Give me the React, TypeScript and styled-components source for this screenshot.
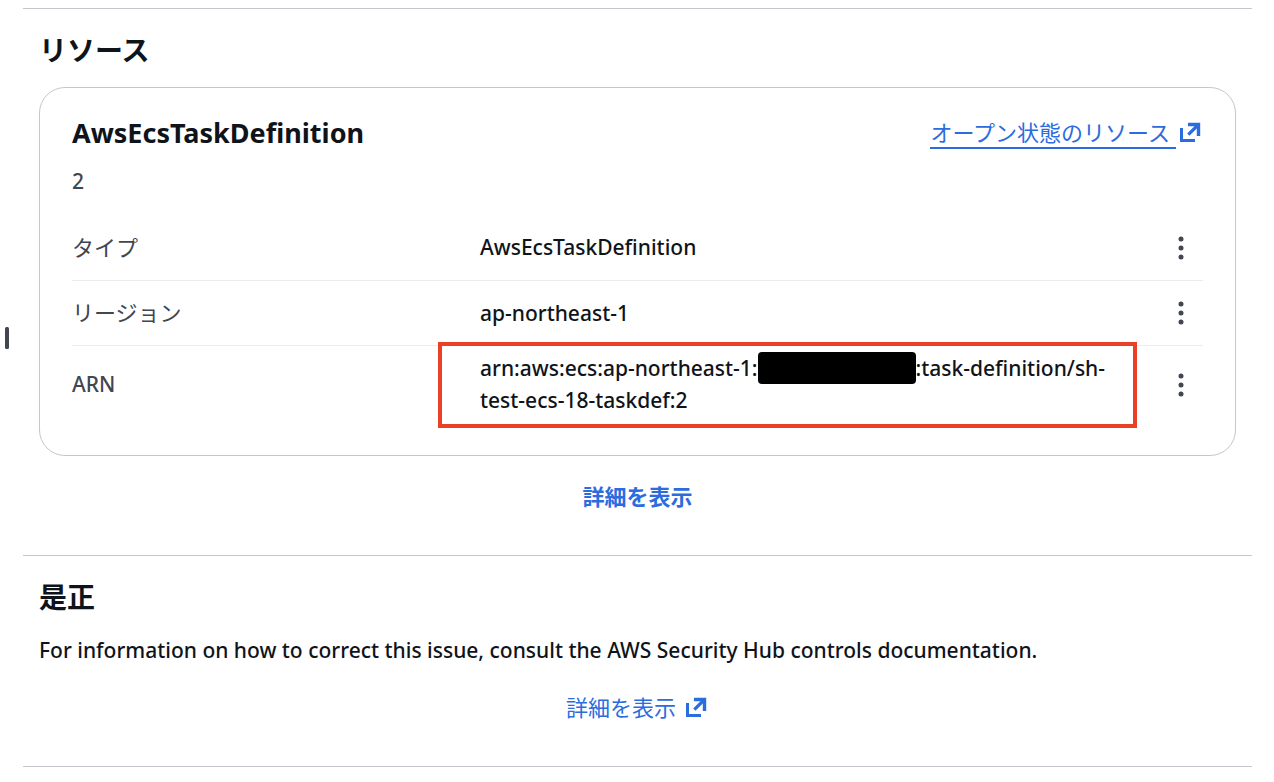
import React from "react";
import styled, { createGlobalStyle } from "styled-components";

const GlobalStyle = createGlobalStyle`
  *, *::before, *::after { box-sizing: border-box; }
  body {
    margin: 0;
    background: #fff;
    color: #0f141a;
    font-family: "Noto Sans", "Noto Sans CJK JP", sans-serif;
    font-size: 21px;
    font-weight: 500;
    line-height: 32px;
  }
  h2, h3, p { margin: 0; }
`;

const Page = styled.div`
  display: grid;
  grid-template-columns: 23px minmax(0, 1fr);
  padding: 8px 22px 8px 0;
`;

const Gutter = styled.div`
  padding: 318px 0 0 4px;
`;

const ResizeHandle = styled.button`
  display: flex;
  padding: 0;
  border: 0;
  background: none;
  cursor: col-resize;
`;

const Section = styled.section`
  border-top: 1px solid #c6c6cd;
  padding: 21px 16px 0;
`;

const Panels = styled.main`
  border-bottom: 1px solid #c6c6cd;
`;

const SectionTitle = styled.h2`
  font-size: 28px;
  line-height: 40px;
  font-weight: 700;
`;

const Card = styled.article`
  margin-top: 17px;
  padding: 27px 32px 32px;
  border: 1px solid #c6c6cd;
  border-radius: 26px;
`;

const CardHeader = styled.header`
  display: flex;
  align-items: center;
  justify-content: space-between;
`;

const CardTitle = styled.h3`
  font-size: 27px;
  line-height: 36px;
  font-weight: 700;
`;

const Version = styled.p`
  margin: 14px 0 18px;
  color: #424650;
`;

const Link = styled.a<{ $underlined?: boolean }>`
  display: inline-flex;
  align-items: center;
  gap: 3px;
  color: #2b6cde;
  font-size: 22px;
  font-weight: 400;
  text-decoration: none;

  span {
    padding-right: 6px;
    line-height: 30px;
    border-bottom: 2px solid ${(p) => (p.$underlined ? "#2b6cde" : "transparent")};
  }
`;

const Fields = styled.table`
  width: 100%;
  table-layout: fixed;
  border-collapse: separate;
  border-spacing: 0;

  tr + tr > * {
    border-top: 1px solid #ebebf0;
  }
`;

const Label = styled.th<{ $latin?: boolean }>`
  width: 408px;
  height: 65px;
  padding: 0 0 2px;
  color: #424650;
  font-size: ${(p) => (p.$latin ? 21 : 22)}px;
  font-weight: ${(p) => (p.$latin ? 500 : 400)};
  text-align: left;
`;

const Value = styled.td`
  position: relative;
  padding: 6px 16px 7px 0;
`;

const Actions = styled.td`
  width: 66px;
  padding: 0 0 2px;
  text-align: right;
`;

const MenuButton = styled.button`
  display: inline-flex;
  align-items: center;
  justify-content: center;
  width: 44px;
  height: 32px;
  padding: 0;
  border: 0;
  background: none;
  color: #424650;
  vertical-align: middle;
  cursor: pointer;
`;

const Highlight = styled.div`
  position: absolute;
  inset: -4px 0 -5px -42px;
  border: 4px solid #ea4126;
  pointer-events: none;
`;

const Redacted = styled.span`
  display: inline-block;
  width: 158px;
  height: 32px;
  border-radius: 4px;
  background: #000;
  vertical-align: top;
`;

const Centered = styled.div<{ $top: number; $bottom: number }>`
  display: flex;
  justify-content: center;
  padding: ${(p) => p.$top}px 0 ${(p) => p.$bottom}px;
`;

const TextButton = styled.button`
  padding: 0;
  border: 0;
  background: none;
  color: #2b6cde;
  font: inherit;
  font-size: 22px;
  font-weight: 700;
  cursor: pointer;
`;

const Description = styled.p`
  margin-top: 17px;
`;

const ExternalIcon = () => (
  <svg width="24" height="24" viewBox="0 0 24 24" fill="none" stroke="currentColor" strokeWidth="3" aria-hidden="true">
    <path d="M2.5 7v12.5H16" />
    <path d="M9 3.5h10.5V15" strokeWidth="3.4" />
    <path d="M19 4 9.3 13.7" strokeWidth="3.2" />
  </svg>
);

const DotsIcon = () => (
  <svg width="6" height="24" viewBox="0 0 6 24" fill="currentColor" aria-hidden="true">
    <circle cx="3" cy="3" r="2.5" />
    <circle cx="3" cy="12" r="2.5" />
    <circle cx="3" cy="21" r="2.5" />
  </svg>
);

const fields: { label: string; value: React.ReactNode; latin?: boolean; highlighted?: boolean }[] = [
  { label: "タイプ", value: "AwsEcsTaskDefinition" },
  { label: "リージョン", value: "ap-northeast-1" },
  {
    label: "ARN",
    value: (
      <>
        arn:aws:ecs:ap-northeast-1:
        <Redacted />
        :task-definition/sh-
        <wbr />
        test-ecs-18-taskdef:2
      </>
    ),
    latin: true,
    highlighted: true,
  },
];

export default function App() {
  return (
    <>
      <GlobalStyle />
      <Page lang="ja">
        <Gutter>
          <ResizeHandle type="button" aria-label="パネルのサイズ変更">
            <svg width="6" height="24" viewBox="0 0 6 24" aria-hidden="true">
              <rect x="1" y="1" width="4" height="22" rx="1.5" fill="#424650" />
            </svg>
          </ResizeHandle>
        </Gutter>
        <Panels>
          <Section>
            <SectionTitle>リソース</SectionTitle>
            <Card>
              <CardHeader>
                <CardTitle>AwsEcsTaskDefinition</CardTitle>
                <Link href="#resource" $underlined>
                  <span>オープン状態のリソース</span>
                  <ExternalIcon />
                </Link>
              </CardHeader>
              <Version>2</Version>
              <Fields>
                <tbody>
                  {fields.map((f) => (
                    <tr key={f.label}>
                      <Label scope="row" $latin={f.latin}>
                        {f.label}
                      </Label>
                      <Value>
                        {f.value}
                        {f.highlighted && <Highlight />}
                      </Value>
                      <Actions>
                        <MenuButton type="button" aria-label={`${f.label} のアクション`}>
                          <DotsIcon />
                        </MenuButton>
                      </Actions>
                    </tr>
                  ))}
                </tbody>
              </Fields>
            </Card>
            <Centered $top={24} $bottom={43}>
              <TextButton type="button">詳細を表示</TextButton>
            </Centered>
          </Section>
          <Section>
            <SectionTitle>是正</SectionTitle>
            <Description>
              For information on how to correct this issue, consult the AWS Security Hub controls documentation.
            </Description>
            <Centered $top={26} $bottom={42}>
              <Link href="#remediation">
                <span>詳細を表示</span>
                <ExternalIcon />
              </Link>
            </Centered>
          </Section>
        </Panels>
      </Page>
    </>
  );
}
